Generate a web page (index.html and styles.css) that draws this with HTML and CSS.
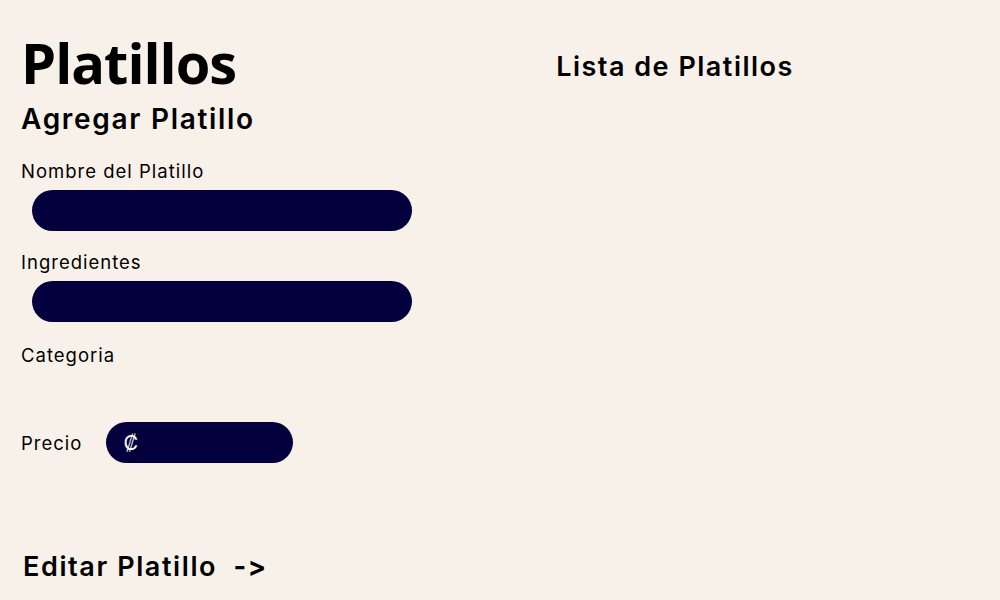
FILE: index.html
```html
<!DOCTYPE html>
<html lang="es">
<head>
    <meta charset="UTF-8">
    <meta name="viewport" content="width=device-width, initial-scale=1.0">
    <title>Platillos</title>
    <link rel="stylesheet" href="styles.css">
</head>
<body>
    <div class="page">
        <section class="form-side">
            <h1>Platillos</h1>
            <h2>Agregar Platillo</h2>

            <form class="dish-form">
                <label for="nombre">Nombre del Platillo</label>
                <input type="text" id="nombre" class="field">

                <label for="ingredientes">Ingredientes</label>
                <input type="text" id="ingredientes" class="field">

                <label class="label-categoria">Categoria</label>

                <div class="price-row">
                    <label for="precio">Precio</label>
                    <div class="price-box">
                        <span class="colon">₡</span>
                        <input type="text" id="precio" class="price-input">
                    </div>
                </div>
            </form>

            <a class="edit-link" href="#">Editar Platillo <span class="arrow">-&gt;</span></a>
        </section>

        <section class="list-side">
            <h3>Lista de Platillos</h3>
            <ul id="dishList"></ul>
        </section>
    </div>
</body>
</html>
```

FILE: styles.css
```css
/* General */
* {
    margin: 0;
    padding: 0;
    box-sizing: border-box;
}

body {
    background-color: #f8f1e9;
    font-family: Inter, "Noto Sans", sans-serif;
    font-variant-ligatures: none;
    font-feature-settings: "calt" 0;
    color: #000;
}

.page {
    display: flex;
    height: 600px;
}

/* Left column */
.form-side {
    width: 500px;
    padding: 30px 0 0 21px;
    display: flex;
    flex-direction: column;
}

h1 {
    font-family: "Open Sans", sans-serif;
    font-size: 56px;
    font-weight: 700;
    letter-spacing: -1px;
    line-height: 64px;
}

h2 {
    font-size: 28px;
    font-weight: 600;
    letter-spacing: 1.7px;
    line-height: 34px;
    margin-top: 8px;
}

.dish-form {
    display: flex;
    flex-direction: column;
    margin-top: 23px;
}

.dish-form label {
    font-size: 18.5px;
    letter-spacing: 1px;
    line-height: 24px;
}

.field {
    width: 380px;
    height: 41px;
    margin: 7px 0 19px 11px;
    border: none;
    border-radius: 21px;
    background-color: #03003d;
    color: #fff;
    padding: 0 18px;
    font-size: 16px;
    outline: none;
}

.label-categoria {
    margin-top: 2px;
}

.price-row {
    display: flex;
    align-items: center;
    gap: 24px;
    margin-top: 55px;
}

.price-box {
    width: 187px;
    height: 41px;
    border-radius: 21px;
    background-color: #03003d;
    display: flex;
    align-items: center;
    padding-left: 17px;
}

.colon {
    color: #fff;
    font-size: 20px;
}

.price-input {
    flex: 1;
    min-width: 0;
    background: transparent;
    border: none;
    outline: none;
    color: #fff;
    font-size: 16px;
    padding: 0 8px;
}

.edit-link {
    margin-top: auto;
    margin-bottom: 17px;
    margin-left: 2px;
    font-size: 27px;
    font-weight: 600;
    letter-spacing: 1.6px;
    color: #000;
    text-decoration: none;
}

.arrow {
    margin-left: 8px;
    font-weight: 700;
}

/* Right column */
.list-side {
    width: 350px;
    padding-top: 49px;
    text-align: center;
}

.list-side h3 {
    font-size: 27px;
    font-weight: 600;
    letter-spacing: 1.5px;
    line-height: 36px;
}

#dishList {
    list-style: none;
}
```
